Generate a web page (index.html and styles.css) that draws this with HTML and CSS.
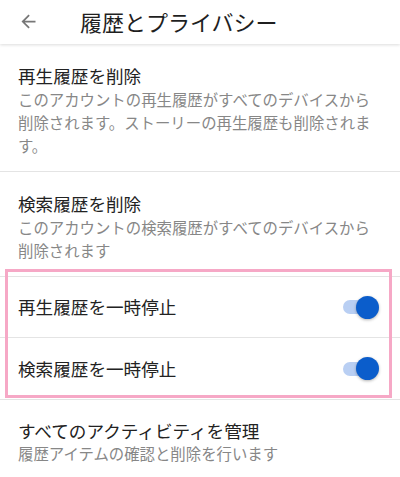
FILE: index.html
```html
<!DOCTYPE html>
<html lang="ja">
<head>
<meta charset="utf-8">
<link rel="stylesheet" href="styles.css">
</head>
<body>
<div class="screen">
  <header class="appbar">
    <svg class="back" viewBox="0 0 24 24" width="21" height="21"><path d="M20 11H7.83l5.59-5.59L12 4l-8 8 8 8 1.41-1.41L7.83 13H20v-2z" fill="#777"/></svg>
    <h1 class="appbar-title">履歴とプライバシー</h1>
  </header>
  <main class="list">
    <div class="item">
      <div class="item-title">再生履歴を削除</div>
      <div class="item-sub">このアカウントの再生履歴がすべてのデバイスから削除されます。ストーリーの再生履歴も削除されます。</div>
    </div>
    <div class="item">
      <div class="item-title">検索履歴を削除</div>
      <div class="item-sub">このアカウントの検索履歴がすべてのデバイスから削除されます</div>
    </div>
    <div class="toggles">
      <div class="row">
        <span class="row-title">再生履歴を一時停止</span>
        <span class="switch"><span class="track"></span><span class="thumb"></span></span>
      </div>
      <div class="row row-b">
        <span class="row-title">検索履歴を一時停止</span>
        <span class="switch"><span class="track"></span><span class="thumb"></span></span>
      </div>
      <div class="highlight"></div>
    </div>
    <div class="item item-last">
      <div class="item-title">すべてのアクティビティを管理</div>
      <div class="item-sub">履歴アイテムの確認と削除を行います</div>
    </div>
  </main>
</div>
</body>
</html>
```
FILE: styles.css
```css
html, body {
  margin: 0;
  padding: 0;
  background: #fff;
}
body {
  font-family: "Noto Sans CJK JP", "Noto Sans", sans-serif;
  color: #212121;
}
.screen {
  width: 400px;
  height: 477px;
  overflow: hidden;
}
.appbar {
  height: 44px;
  display: flex;
  align-items: center;
  box-shadow: 0 1px 3px rgba(0, 0, 0, 0.14);
  position: relative;
  z-index: 1;
}
.back {
  margin-left: 18px;
  margin-top: -1px;
  flex: none;
}
.appbar-title {
  margin: 0 0 2px 41px;
  font-size: 22px;
  font-weight: 400;
  line-height: 28px;
  color: #1f1f1f;
}
.item {
  padding: 20px 20px 14px 18px;
  border-bottom: 1px solid #e4e4e4;
}
.item-last {
  border-bottom: none;
  padding-top: 19px;
}
.item-title {
  font-size: 17.6px;
  line-height: 24px;
  color: #222;
}
.item-sub {
  font-size: 15.4px;
  line-height: 23px;
  color: #878787;
}
.item-last .item-title {
  line-height: 23px;
}
.item-last .item-sub {
  line-height: 22px;
}
.toggles {
  position: relative;
}
.row {
  height: 60px;
  display: flex;
  align-items: center;
  justify-content: space-between;
  padding: 0 21px 0 18px;
  border-bottom: 1px solid #e4e4e4;
}
.row-b {
  height: 61px;
}
.row-title {
  font-size: 17.6px;
  line-height: 24px;
  color: #222;
}
.switch {
  position: relative;
  width: 36px;
  height: 23px;
  display: flex;
  align-items: center;
}
.track {
  width: 34px;
  height: 14px;
  border-radius: 7px;
  background: #b9cff3;
}
.thumb {
  position: absolute;
  right: 0;
  top: 0;
  width: 23px;
  height: 23px;
  border-radius: 50%;
  background: #0b5dcb;
  box-shadow: 0 1px 3px rgba(0, 0, 0, 0.3);
}
.highlight {
  position: absolute;
  left: 5px;
  top: -8px;
  width: 381px;
  height: 123px;
  border: 3px solid #f6a8c6;
  pointer-events: none;
}
```
